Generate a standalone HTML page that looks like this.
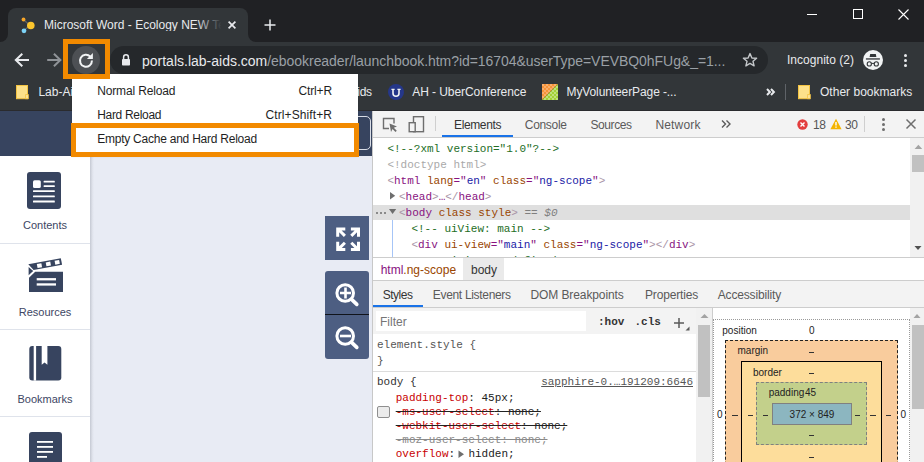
<!DOCTYPE html>
<html><head><meta charset="utf-8">
<style>
*{margin:0;padding:0;box-sizing:border-box}
html,body{width:924px;height:462px;overflow:hidden;background:#202124;font-family:"Liberation Sans",sans-serif;position:relative}
.a{position:absolute;white-space:nowrap}
.mono{font-family:"Liberation Mono",monospace}
svg.a{overflow:visible}
</style></head><body>
<div class="a" style="left:0px;top:0px;width:924px;height:42px;background:#202124;"></div>
<div class="a" style="left:8px;top:8px;width:240px;height:34px;background:#323639;border-radius:8px 8px 0 0"></div>
<div class="a" style="left:0px;top:34px;width:8px;height:8px;background:#323639;"></div>
<div class="a" style="left:0px;top:26px;width:8px;height:16px;background:#202124;border-bottom-right-radius:8px"></div>
<div class="a" style="left:248px;top:34px;width:8px;height:8px;background:#323639;"></div>
<div class="a" style="left:248px;top:26px;width:8px;height:16px;background:#202124;border-bottom-left-radius:8px"></div>
<svg class="a" style="left:20px;top:15.5px;" width="18" height="18" viewBox="0 0 18 18"><line x1="4.5" y1="4.5" x2="10" y2="9.5" stroke="#5f6368" stroke-width="1.2"/><line x1="5" y1="13.5" x2="10" y2="9.5" stroke="#5f6368" stroke-width="1.2"/><circle cx="3.5" cy="3.5" r="1.9" fill="#f8a629"/><circle cx="10.8" cy="9.5" r="3.8" fill="#fcc62d"/><circle cx="4" cy="14.8" r="2.4" fill="#7dd3f7"/></svg>
<div class="a" style="left:44.00px;top:18.84px;font-size:12px;line-height:12px;color:#e8eaed;width:182px;overflow:hidden">Microsoft Word - Ecology NEW Teacher</div>
<div class="a" style="left:196px;top:14px;width:30px;height:22px;background:linear-gradient(to right,rgba(50,54,57,0),#323639 85%);"></div>
<svg class="a" style="left:228px;top:20.7px;" width="8" height="8" viewBox="0 0 8 8"><path d="M0.6 0.6L7.4 7.4M7.4 0.6L0.6 7.4" stroke="#e8eaed" stroke-width="1.7"/></svg>
<svg class="a" style="left:263px;top:18px;" width="14" height="14" viewBox="0 0 14 14"><path d="M7 1.5V12.5M1.5 7H12.5" stroke="#e8eaed" stroke-width="1.5"/></svg>
<div class="a" style="left:807px;top:14px;width:10px;height:1px;background:#fff;"></div>
<div class="a" style="left:853px;top:9px;width:10px;height:10px;border:1px solid #fff"></div>
<svg class="a" style="left:898px;top:9px;" width="11" height="11" viewBox="0 0 11 11"><path d="M0.5 0.5L10.5 10.5M10.5 0.5L0.5 10.5" stroke="#fff" stroke-width="1.1"/></svg>
<div class="a" style="left:0px;top:42px;width:924px;height:68px;background:#323639;"></div>
<div class="a" style="left:0px;top:110px;width:924px;height:1px;background:#2a2b2e;"></div>
<svg class="a" style="left:14px;top:53px;" width="16" height="14" viewBox="0 0 16 14"><path d="M15 7H2M8.3 0.7L1.8 7L8.3 13.3" fill="none" stroke="#e8eaed" stroke-width="2"/></svg>
<svg class="a" style="left:46px;top:53px;" width="16" height="14" viewBox="0 0 16 14"><path d="M1.2 7H14.2M7.9 0.7L14.4 7L7.9 13.3" fill="none" stroke="#8f9397" stroke-width="2"/></svg>
<div class="a" style="left:72px;top:46px;width:28px;height:28px;border-radius:14px;background:#4d5054"></div>
<svg class="a" style="left:78px;top:52px;" width="16" height="16" viewBox="0 0 16 16"><path d="M12.3 4.6A6 6 0 1 0 13.95 8.6" fill="none" stroke="#f1f3f4" stroke-width="2"/><path d="M14.9 0.9V6.9H8.9Z" fill="#f1f3f4"/></svg>
<div class="a" style="left:110px;top:46px;width:658px;height:28px;background:#25282b;border-radius:14px"></div>
<svg class="a" style="left:121px;top:53px;" width="10" height="13" viewBox="0 0 10 13"><path d="M2.6 6V4.2A2.4 2.4 0 0 1 7.4 4.2V6" fill="none" stroke="#e8eaed" stroke-width="1.5"/><rect x="1" y="6" width="8" height="6.5" rx="0.8" fill="#e8eaed"/></svg>
<div class="a" style="left:142.00px;top:54.15px;font-size:14px;line-height:14px;color:#e8eaed;">portals.lab-aids.com<span style="color:#9aa0a6;letter-spacing:-0.05px">/ebookreader/launchbook.htm?id=16704&amp;userType=VEVBQ0hFUg&amp;_=1...</span></div>
<svg class="a" style="left:742px;top:52px;" width="16" height="16" viewBox="0 0 16 16"><path d="M8 1.6L9.9 6L14.6 6.3L11 9.3L12.1 13.9L8 11.4L3.9 13.9L5 9.3L1.4 6.3L6.1 6Z" fill="none" stroke="#c4c7ca" stroke-width="1.4" stroke-linejoin="round"/></svg>
<div class="a" style="left:787.00px;top:53.84px;font-size:12px;line-height:12px;color:#e8eaed;;letter-spacing:0.024px">Incognito (2)</div>
<div class="a" style="left:863px;top:50px;width:20px;height:20px;border-radius:10px;background:#f1f3f4"></div>
<svg class="a" style="left:863px;top:50px;" width="20" height="20" viewBox="0 0 20 20"><path d="M7.2 3.9H12.8L13.4 7H6.6Z" fill="#323639"/><rect x="2.9" y="8.3" width="14" height="1.3" fill="#323639"/><circle cx="6.3" cy="13.9" r="2.1" fill="none" stroke="#323639" stroke-width="1.1"/><circle cx="13.3" cy="13.9" r="2.1" fill="none" stroke="#323639" stroke-width="1.1"/><path d="M8.4 13.4H11.2" stroke="#323639" stroke-width="1"/></svg>
<div class="a" style="left:903.9px;top:54.0px;width:3.2px;height:3.2px;border-radius:2px;background:#e8eaed"></div>
<div class="a" style="left:903.9px;top:58.8px;width:3.2px;height:3.2px;border-radius:2px;background:#e8eaed"></div>
<div class="a" style="left:903.9px;top:63.6px;width:3.2px;height:3.2px;border-radius:2px;background:#e8eaed"></div>
<svg class="a" style="left:16px;top:84.8px;" width="14" height="15" viewBox="0 0 14 15"><rect x="0.5" y="0.5" width="11" height="13.2" fill="#fde18a" stroke="#f4c443" stroke-width="1"/><rect x="9.7" y="9.6" width="2.6" height="4.1" fill="#fde8a6" stroke="#f4c443" stroke-width="0.9"/></svg>
<div class="a" style="left:38.40px;top:86.34px;font-size:12px;line-height:12px;color:#e8eaed;">Lab-Aids</div>
<div class="a" style="left:357.30px;top:86.34px;font-size:12px;line-height:12px;color:#e8eaed;letter-spacing:-0.3px">ids</div>
<svg class="a" style="left:388px;top:84px;" width="16" height="16" viewBox="0 0 16 16"><circle cx="8" cy="8" r="8" fill="#25378a"/><path d="M5 5.4V9.2A3 3 0 0 0 11 9.2V5.4" fill="none" stroke="#f1f3f4" stroke-width="1.6"/><path d="M3.4 5.3H6.6M9.4 5.3H12.6" stroke="#f1f3f4" stroke-width="1.3"/></svg>
<div class="a" style="left:412.20px;top:86.34px;font-size:12px;line-height:12px;color:#e8eaed;;letter-spacing:-0.062px">AH - UberConference</div>
<svg class="a" style="left:542px;top:84px;" width="16" height="16" viewBox="0 0 16 16"><defs><pattern id="p" width="4" height="4" patternUnits="userSpaceOnUse"><rect width="4" height="4" fill="#f69337"/><rect width="2" height="2" fill="#f9ae6b"/><rect x="2" y="2" width="2" height="2" fill="#f9ae6b"/></pattern><pattern id="q" width="4" height="4" patternUnits="userSpaceOnUse"><rect width="4" height="4" fill="#a3d035"/><rect width="2" height="2" fill="#bfe07a"/><rect x="2" y="2" width="2" height="2" fill="#bfe07a"/></pattern></defs><path d="M0 0H16L0 16Z" fill="url(#p)"/><path d="M16 0V16H0Z" fill="url(#q)"/></svg>
<div class="a" style="left:566.50px;top:86.34px;font-size:12px;line-height:12px;color:#e8eaed;;letter-spacing:-0.102px">MyVolunteerPage -...</div>
<svg class="a" style="left:766px;top:88px;" width="10" height="8" viewBox="0 0 10 8"><path d="M1 1L3.9 4L1 7M5 1L7.9 4L5 7" fill="none" stroke="#e8eaed" stroke-width="2"/></svg>
<div class="a" style="left:785px;top:84px;width:1px;height:16px;background:#5f6368;"></div>
<svg class="a" style="left:797.5px;top:84.8px;" width="14" height="15" viewBox="0 0 14 15"><rect x="0.5" y="0.5" width="11" height="13.2" fill="#fde18a" stroke="#f4c443" stroke-width="1"/><rect x="9.7" y="9.6" width="2.6" height="4.1" fill="#fde8a6" stroke="#f4c443" stroke-width="0.9"/></svg>
<div class="a" style="left:820.00px;top:86.34px;font-size:12px;line-height:12px;color:#e8eaed;;letter-spacing:0.019px">Other bookmarks</div>
<div class="a" style="left:0px;top:111px;width:372px;height:45px;background:#37445f;"></div>
<div class="a" style="left:250px;top:116px;width:121px;height:34px;border:1px solid #d9dde6;border-radius:5px"></div>
<div class="a" style="left:0px;top:156px;width:90px;height:306px;background:#ffffff;"></div>
<div class="a" style="left:90px;top:156px;width:282px;height:306px;background:#e8ebf4;"></div>
<div class="a" style="left:90px;top:156px;width:4px;height:306px;background:linear-gradient(to right,#c5c9d3,#dfe2eb 60%,#e8ebf4);"></div>
<div class="a" style="left:0px;top:243px;width:90px;height:1px;background:#dfe3eb;"></div>
<div class="a" style="left:0px;top:329px;width:90px;height:1px;background:#dfe3eb;"></div>
<div class="a" style="left:0px;top:416px;width:90px;height:1px;background:#dfe3eb;"></div>
<svg class="a" style="left:27px;top:171.8px;" width="34" height="38" viewBox="0 0 34 38"><rect x="0" y="0" width="34" height="37" rx="3" fill="#37445f"/><rect x="6" y="8.2" width="7.8" height="7.8" rx="1.6" fill="#fff"/><rect x="16.6" y="8.8" width="11.2" height="1.8" rx="0.5" fill="#fff"/><rect x="16.6" y="13.3" width="11.2" height="1.8" rx="0.5" fill="#fff"/><rect x="6" y="18.3" width="21.8" height="1.8" rx="0.5" fill="#fff"/><rect x="6" y="23.5" width="21.8" height="1.8" rx="0.5" fill="#fff"/><rect x="6" y="28.6" width="21.8" height="1.8" rx="0.5" fill="#fff"/></svg>
<div class="a" style="left:45.00px;top:219.69px;font-size:11px;line-height:11px;color:#3d4663;transform:translateX(-50%)">Contents</div>
<svg class="a" style="left:24px;top:254px;" width="44" height="42" viewBox="0 0 44 42"><path d="M4.3 10.3L36.8 4.2L38.1 10.7L9.6 16.1Z" fill="#37445f"/><rect x="13.149999999999999" y="9.65" width="4.6" height="4" fill="#fff" transform="rotate(-10.7 15.45 11.65)"/><rect x="22.05" y="7.960000000000001" width="4.6" height="4" fill="#fff" transform="rotate(-10.7 24.35 9.96)"/><rect x="30.900000000000002" y="6.300000000000001" width="4.6" height="4" fill="#fff" transform="rotate(-10.7 33.2 8.3)"/><path d="M4.6 13L9.2 17L4.6 21.3Z" fill="#37445f"/><path d="M11.2 17.8H39V38H5V23.7Z" fill="#37445f"/><rect x="12.7" y="24.1" width="19.3" height="2.3" fill="#fff"/><rect x="12.7" y="29.3" width="19.3" height="2.3" fill="#fff"/></svg>
<div class="a" style="left:45.00px;top:306.69px;font-size:11px;line-height:11px;color:#3d4663;transform:translateX(-50%)">Resources</div>
<svg class="a" style="left:29px;top:345px;" width="33" height="36" viewBox="0 0 33 36"><rect x="0.3" y="1" width="32" height="34.6" rx="3" fill="#37445f"/><rect x="4.7" y="1" width="2.4" height="34.6" fill="#fff"/><path d="M12.7 1H18.4V19.8L15.55 17.4L12.7 19.8Z" fill="#fff"/></svg>
<div class="a" style="left:45.00px;top:394.39px;font-size:11px;line-height:11px;color:#3d4663;transform:translateX(-50%)">Bookmarks</div>
<svg class="a" style="left:29px;top:431px;" width="33" height="31" viewBox="0 0 33 31"><rect x="0" y="1" width="33" height="40" rx="3" fill="#37445f"/><rect x="8" y="10" width="16" height="1.8" fill="#fff"/><rect x="8" y="15" width="16" height="1.8" fill="#fff"/><rect x="8" y="20" width="16" height="1.8" fill="#fff"/><rect x="8" y="25" width="10" height="1.8" fill="#fff"/></svg>
<div class="a" style="left:325px;top:216px;width:44px;height:44px;background:#4d5e82;"></div>
<svg class="a" style="left:325px;top:216px;" width="44" height="44" viewBox="0 0 44 44"><g fill="none" stroke="#fff" stroke-width="3"><path d="M12.7 20.8V13.1H20.3M13.5 13.5L19.9 19.9"/><path d="M33.5 20.8V13.1H25.9M32.7 13.5L26.3 19.9"/><path d="M12.7 25.8V33.5H20.3M13.5 33.1L19.9 26.7"/><path d="M33.5 25.8V33.5H25.9M32.7 33.1L26.3 26.7"/></g></svg>
<div class="a" style="left:325px;top:271px;width:44px;height:88px;background:#4d5e82;border-radius:3px"></div>
<div class="a" style="left:325px;top:313.6px;width:44px;height:1.9px;background:#10131a;"></div>
<svg class="a" style="left:325px;top:278px;" width="44" height="44" viewBox="0 0 44 44"><circle cx="20.2" cy="15" r="8.3" fill="none" stroke="#fff" stroke-width="3"/><path d="M26.6 21.4L31.8 26.4" stroke="#fff" stroke-width="3.6" stroke-linecap="round"/><path d="M15 15H26M20.5 9.5V20.5" stroke="#fff" stroke-width="2.6"/></svg>
<svg class="a" style="left:325px;top:321.1px;" width="44" height="44" viewBox="0 0 44 44"><circle cx="20.2" cy="15" r="8.3" fill="none" stroke="#fff" stroke-width="3"/><path d="M26.6 21.4L31.8 26.4" stroke="#fff" stroke-width="3.6" stroke-linecap="round"/><path d="M15 15H26" stroke="#fff" stroke-width="2.6"/></svg>
<div class="a" style="left:372px;top:111px;width:552px;height:351px;background:#ffffff;"></div>
<div class="a" style="left:372px;top:111px;width:1px;height:351px;background:#c8c8c8;"></div>
<div class="a" style="left:373px;top:111px;width:551px;height:26px;background:#f3f3f3;"></div>
<div class="a" style="left:373px;top:137px;width:551px;height:1px;background:#cdcdcd;"></div>
<svg class="a" style="left:382px;top:117px;" width="16" height="16" viewBox="0 0 16 16"><path d="M7 11.5H1.5V1.5H12V6.5" fill="none" stroke="#6e6e6e" stroke-width="1.4"/><path d="M7.5 6.5L15 9.5L11.8 10.8L14.8 13.8L13.5 15L10.5 12L9 15Z" fill="#6e6e6e"/></svg>
<svg class="a" style="left:408px;top:116px;" width="17" height="17" viewBox="0 0 17 17"><rect x="5.5" y="0.7" width="10" height="15" fill="none" stroke="#6e6e6e" stroke-width="1.4"/><rect x="1.2" y="6.7" width="6" height="9" fill="#f3f3f3" stroke="#6e6e6e" stroke-width="1.4"/></svg>
<div class="a" style="left:435px;top:116px;width:1px;height:15px;background:#cfcfcf;"></div>
<div class="a" style="left:454.00px;top:118.84px;font-size:12px;line-height:12px;color:#333333;;letter-spacing:-0.377px">Elements</div>
<div class="a" style="left:442px;top:135px;width:71px;height:2px;background:#1a73e8;"></div>
<div class="a" style="left:524.80px;top:118.84px;font-size:12px;line-height:12px;color:#5a5a5a;;letter-spacing:-0.319px">Console</div>
<div class="a" style="left:590.40px;top:118.84px;font-size:12px;line-height:12px;color:#5a5a5a;;letter-spacing:-0.402px">Sources</div>
<div class="a" style="left:655.40px;top:118.84px;font-size:12px;line-height:12px;color:#5a5a5a;;letter-spacing:0.183px">Network</div>
<svg class="a" style="left:720px;top:118px;" width="12" height="12" viewBox="0 0 12 12"><path d="M2 2.5L5.5 6L2 9.5M6.5 2.5L10 6L6.5 9.5" fill="none" stroke="#5a5a5a" stroke-width="1.4"/></svg>
<svg class="a" style="left:797px;top:119px;" width="11" height="11" viewBox="0 0 11 11"><circle cx="5.5" cy="5.5" r="5.2" fill="#e33e3e"/><path d="M3.5 3.5L7.5 7.5M7.5 3.5L3.5 7.5" stroke="#fff" stroke-width="1.4"/></svg>
<div class="a" style="left:813.00px;top:118.84px;font-size:12px;line-height:12px;color:#555;letter-spacing:-0.4px">18</div>
<svg class="a" style="left:830px;top:118px;" width="12" height="12" viewBox="0 0 12 12"><path d="M6 0.8L11.6 11.2H0.4Z" fill="#f4b400"/><path d="M6 4V7.5M6 8.6V9.8" stroke="#fff" stroke-width="1.4"/></svg>
<div class="a" style="left:845.00px;top:118.84px;font-size:12px;line-height:12px;color:#555;letter-spacing:-0.4px">30</div>
<div class="a" style="left:864px;top:116px;width:1px;height:16px;background:#cfcfcf;"></div>
<div class="a" style="left:881.8px;top:117.80000000000001px;width:3.2px;height:3.2px;background:#6e6e6e;border-radius:50%"></div>
<div class="a" style="left:881.8px;top:122.80000000000001px;width:3.2px;height:3.2px;background:#6e6e6e;border-radius:50%"></div>
<div class="a" style="left:881.8px;top:127.80000000000001px;width:3.2px;height:3.2px;background:#6e6e6e;border-radius:50%"></div>
<svg class="a" style="left:906px;top:119px;" width="10" height="10" viewBox="0 0 10 10"><path d="M0.5 0.5L9.5 9.5M9.5 0.5L0.5 9.5" stroke="#6e6e6e" stroke-width="1.5"/></svg>
<div class="a" style="left:373px;top:205px;width:537px;height:15px;background:#dfdfdf;"></div>
<div class="a" style="left:392px;top:220px;width:1px;height:38px;background:#a6c5f7;"></div>
<div class="a" style="left:373px;top:138px;width:537px;height:119px;overflow:hidden">
<div class="a mono" style="left:14.4px;top:5.57px;font-size:11px;line-height:11px;color:#222"><span style="color:#236e25">&lt;!--?xml version=&quot;1.0&quot;?--&gt;</span></div>
<div class="a mono" style="left:14.4px;top:21.57px;font-size:11px;line-height:11px;color:#222"><span style="color:#a9a9a9">&lt;!doctype html&gt;</span></div>
<div class="a mono" style="left:14.4px;top:37.57px;font-size:11px;line-height:11px;color:#222"><span style="color:#a894a6">&lt;</span><span style="color:#881280">html</span> <span style="color:#994500">lang</span><span style="color:#881280">=&quot;</span><span style="color:#1a1aa6">en</span><span style="color:#881280">&quot;</span> <span style="color:#994500">class</span><span style="color:#881280">=&quot;</span><span style="color:#1a1aa6">ng-scope</span><span style="color:#881280">&quot;</span><span style="color:#a894a6">&gt;</span></div>
<div class="a mono" style="left:26.0px;top:53.57px;font-size:11px;line-height:11px;color:#222"><span style="color:#a894a6">&lt;</span><span style="color:#881280">head</span><span style="color:#a894a6">&gt;</span><span style="color:#881280">…</span><span style="color:#a894a6">&lt;/</span><span style="color:#881280">head</span><span style="color:#a894a6">&gt;</span></div>
<div class="a mono" style="left:26.0px;top:69.57px;font-size:11px;line-height:11px;color:#222"><span style="color:#a894a6">&lt;</span><span style="color:#881280">body</span> <span style="color:#994500">class</span> <span style="color:#994500">style</span><span style="color:#a894a6">&gt;</span> <span style="color:#7f7f7f;font-style:italic">== $0</span></div>
<div class="a mono" style="left:38.4px;top:85.57px;font-size:11px;line-height:11px;color:#222"><span style="color:#236e25">&lt;!-- uiView: main --&gt;</span></div>
<div class="a mono" style="left:38.4px;top:101.57px;font-size:11px;line-height:11px;color:#222"><span style="color:#a894a6">&lt;</span><span style="color:#881280">div</span> <span style="color:#994500">ui-view</span><span style="color:#881280">=&quot;</span><span style="color:#1a1aa6">main</span><span style="color:#881280">&quot;</span> <span style="color:#994500">class</span><span style="color:#881280">=&quot;</span><span style="color:#1a1aa6">ng-scope</span><span style="color:#881280">&quot;</span><span style="color:#a894a6">&gt;</span><span style="color:#a894a6">&lt;/</span><span style="color:#881280">div</span><span style="color:#a894a6">&gt;</span></div>
<div class="a mono" style="left:38.4px;top:117.57px;font-size:11px;line-height:11px;color:#222"><span style="color:#236e25">&lt;!-- uiView: undefined --&gt;</span></div>
</div>
<svg class="a" style="left:390px;top:191.5px;" width="6" height="8" viewBox="0 0 6 8"><path d="M0 0L5.2 3.7L0 7.4Z" fill="#6e6e6e"/></svg>
<svg class="a" style="left:389px;top:209px;" width="8" height="6" viewBox="0 0 8 6"><path d="M0 0H7.2L3.6 5Z" fill="#6e6e6e"/></svg>
<div class="a" style="left:375.5px;top:212.2px;width:2.2px;height:2.2px;background:#6e6e6e;border-radius:1px"></div>
<div class="a" style="left:379.5px;top:212.2px;width:2.2px;height:2.2px;background:#6e6e6e;border-radius:1px"></div>
<div class="a" style="left:383.5px;top:212.2px;width:2.2px;height:2.2px;background:#6e6e6e;border-radius:1px"></div>
<div class="a" style="left:910px;top:138px;width:14px;height:119px;background:#f1f1f1;"></div>
<svg class="a" style="left:912px;top:144px;" width="12" height="6" viewBox="0 0 12 6"><path d="M2.6 5L6.4 0.8L10.2 5Z" fill="#a3a3a3"/></svg>
<div class="a" style="left:912px;top:155px;width:12px;height:17px;background:#c1c1c1;"></div>
<svg class="a" style="left:912px;top:244px;" width="12" height="8" viewBox="0 0 12 8"><path d="M2.5 2L6 6L9.5 2Z" fill="#505050"/></svg>
<div class="a" style="left:373px;top:257px;width:551px;height:1px;background:#cdcdcd;"></div>
<div class="a" style="left:463px;top:258px;width:41px;height:22px;background:#eaeaea;"></div>
<div class="a" style="left:380.70px;top:263.84px;font-size:12px;line-height:12px;color:#333;"><span style="color:#881280">html</span><span style="color:#994500">.ng-scope</span></div>
<div class="a" style="left:471.00px;top:263.84px;font-size:12px;line-height:12px;color:#333;">body</div>
<div class="a" style="left:373px;top:280px;width:551px;height:1px;background:#cdcdcd;"></div>
<div class="a" style="left:373px;top:281px;width:551px;height:26px;background:#f3f3f3;"></div>
<div class="a" style="left:373px;top:307px;width:551px;height:1px;background:#cdcdcd;"></div>
<div class="a" style="left:382.70px;top:288.84px;font-size:12px;line-height:12px;color:#333;;letter-spacing:-0.479px">Styles</div>
<div class="a" style="left:373px;top:305px;width:50px;height:2px;background:#1a73e8;"></div>
<div class="a" style="left:432.80px;top:288.84px;font-size:12px;line-height:12px;color:#5a5a5a;;letter-spacing:-0.319px">Event Listeners</div>
<div class="a" style="left:530.50px;top:288.84px;font-size:12px;line-height:12px;color:#5a5a5a;;letter-spacing:-0.099px">DOM Breakpoints</div>
<div class="a" style="left:645.00px;top:288.84px;font-size:12px;line-height:12px;color:#5a5a5a;;letter-spacing:-0.149px">Properties</div>
<div class="a" style="left:717.70px;top:288.84px;font-size:12px;line-height:12px;color:#5a5a5a;;letter-spacing:-0.158px">Accessibility</div>
<div class="a" style="left:373px;top:308px;width:323px;height:26px;background:#f3f3f3;"></div>
<div class="a" style="left:376px;top:311px;width:210px;height:20px;background:#ffffff;"></div>
<div class="a" style="left:380.00px;top:316.14px;font-size:12px;line-height:12px;color:#757575;">Filter</div>
<div class="a mono" style="left:598.00px;top:316.57px;font-size:11px;line-height:11px;color:#333;font-weight:bold">:hov</div>
<div class="a mono" style="left:634.50px;top:316.57px;font-size:11px;line-height:11px;color:#333;font-weight:bold">.cls</div>
<svg class="a" style="left:673px;top:317px;" width="12" height="12" viewBox="0 0 12 12"><path d="M6 1V11M1 6H11" stroke="#5a5a5a" stroke-width="1.5"/></svg>
<svg class="a" style="left:685px;top:326px;" width="5" height="5" viewBox="0 0 5 5"><path d="M4.5 0.5V4.5H0.5Z" fill="#5a5a5a"/></svg>
<div class="a mono" style="left:377.00px;top:339.57px;font-size:11px;line-height:11px;color:#555;">element.style {</div>
<div class="a mono" style="left:377.00px;top:355.57px;font-size:11px;line-height:11px;color:#555;">}</div>
<div class="a" style="left:373px;top:371px;width:323px;height:1px;background:#dcdcdc;"></div>
<div class="a mono" style="left:377.00px;top:376.57px;font-size:11px;line-height:11px;color:#333;">body {</div>
<div class="a mono" style="right:231.00px;top:376.57px;font-size:11px;line-height:11px;color:#555;text-decoration:underline">sapphire-0.…191209:6646</div>
<div class="a mono" style="left:395.70px;top:392.57px;font-size:11px;line-height:11px;color:#222;"><span style="color:#c80000">padding-top</span>: 45px;</div>
<div class="a" style="left:377px;top:405.5px;width:12.5px;height:12px;background:#ececec;border:1px solid #8f8f8f;border-radius:2px"></div>
<div class="a mono" style="left:395.70px;top:406.57px;font-size:11px;line-height:11px;color:#222;text-decoration:line-through"><span style="color:#c80000">-ms-user-select</span>: none;</div>
<div class="a mono" style="left:395.70px;top:420.57px;font-size:11px;line-height:11px;color:#222;text-decoration:line-through"><span style="color:#c80000">-webkit-user-select</span>: none;</div>
<div class="a mono" style="left:395.70px;top:434.57px;font-size:11px;line-height:11px;color:#8a8a8a;text-decoration:line-through">-moz-user-select: none;</div>
<div class="a mono" style="left:395.70px;top:448.57px;font-size:11px;line-height:11px;color:#222;"><span style="color:#c80000">overflow</span>:<span style="display:inline-block;width:13.3px"></span>hidden;</div>
<svg class="a" style="left:458px;top:449.5px;" width="7" height="9" viewBox="0 0 7 9"><path d="M0.5 0.5L6 4.2L0.5 8Z" fill="#6e6e6e"/></svg>
<div class="a" style="left:696px;top:308px;width:17px;height:154px;background:#f1f1f1;"></div>
<svg class="a" style="left:696px;top:312px;" width="17" height="8" viewBox="0 0 17 8"><path d="M4.5 6L8.5 2L12.5 6Z" fill="#a3a3a3"/></svg>
<div class="a" style="left:697.5px;top:324.5px;width:12.5px;height:72px;background:#c1c1c1;"></div>
<div class="a" style="left:712px;top:308px;width:1px;height:154px;background:#cdcdcd;"></div>
<div class="a" style="left:713px;top:319px;width:197px;height:160px;border:1px dotted #9a9a9a"></div>
<div class="a" style="left:722.30px;top:325.54px;font-size:10px;line-height:10px;color:#222;">position</div>
<div class="a" style="left:809.00px;top:325.54px;font-size:10px;line-height:10px;color:#222;">0</div>
<div class="a" style="left:725px;top:340px;width:173px;height:140px;background:#f9cc9d;border:1px dashed #222"></div>
<div class="a" style="left:737.50px;top:346.34px;font-size:10px;line-height:10px;color:#222;">margin</div>
<div class="a" style="left:808.95px;top:352px;width:5.5px;height:1px;background:#333;"></div>
<div class="a" style="left:741px;top:361px;width:141px;height:110px;background:#fddd9b;border:1.5px solid #000"></div>
<div class="a" style="left:753.00px;top:367.54px;font-size:10px;line-height:10px;color:#222;">border</div>
<div class="a" style="left:808.95px;top:373px;width:5.5px;height:1px;background:#333;"></div>
<div class="a" style="left:756px;top:382px;width:111px;height:63px;background:#c3d08b;border:1px dashed #808080"></div>
<div class="a" style="left:768.70px;top:388.14px;font-size:10px;line-height:10px;color:#222;">padding</div>
<div class="a" style="left:805.00px;top:388.14px;font-size:10px;line-height:10px;color:#222;">45</div>
<div class="a" style="left:772px;top:403px;width:80px;height:22px;background:#8cb6c0;border:1px solid #808080"></div>
<div class="a" style="left:812.00px;top:409.54px;font-size:10px;line-height:10px;color:#222;transform:translateX(-50%)">372 × 849</div>
<div class="a" style="left:808.95px;top:435px;width:5.5px;height:1px;background:#333;"></div>
<div class="a" style="left:808.95px;top:456.5px;width:5.5px;height:1px;background:#333;"></div>
<div class="a" style="left:717.00px;top:409.54px;font-size:10px;line-height:10px;color:#222;">0</div>
<div class="a" style="left:732.25px;top:415px;width:5.5px;height:1px;background:#333;"></div>
<div class="a" style="left:747.65px;top:415px;width:5.5px;height:1px;background:#333;"></div>
<div class="a" style="left:762.75px;top:415px;width:5.5px;height:1px;background:#333;"></div>
<div class="a" style="left:854.75px;top:415px;width:5.5px;height:1px;background:#333;"></div>
<div class="a" style="left:870.25px;top:415px;width:5.5px;height:1px;background:#333;"></div>
<div class="a" style="left:885.75px;top:415px;width:5.5px;height:1px;background:#333;"></div>
<div class="a" style="left:900.50px;top:409.54px;font-size:10px;line-height:10px;color:#222;">0</div>
<div class="a" style="left:910px;top:308px;width:14px;height:154px;background:#f1f1f1;"></div>
<svg class="a" style="left:910px;top:312px;" width="14" height="8" viewBox="0 0 14 8"><path d="M3.5 6L7 2L10.5 6Z" fill="#a3a3a3"/></svg>
<div class="a" style="left:912px;top:324.5px;width:12px;height:84px;background:#c1c1c1;"></div>
<div class="a" style="left:72px;top:74px;width:286px;height:82px;background:#fff;box-shadow:0 1px 2px rgba(0,0,0,0.08)"></div>
<div class="a" style="left:97.20px;top:84.84px;font-size:12px;line-height:12px;color:#1f1f1f;;letter-spacing:-0.142px">Normal Reload</div>
<div class="a" style="right:592.00px;top:84.84px;font-size:12px;line-height:12px;color:#1f1f1f;;letter-spacing:-0.143px">Ctrl+R</div>
<div class="a" style="left:97.20px;top:108.84px;font-size:12px;line-height:12px;color:#1f1f1f;;letter-spacing:-0.307px">Hard Reload</div>
<div class="a" style="right:592.00px;top:108.84px;font-size:12px;line-height:12px;color:#1f1f1f;;letter-spacing:0.085px">Ctrl+Shift+R</div>
<div class="a" style="left:97.20px;top:132.84px;font-size:12px;line-height:12px;color:#1f1f1f;;letter-spacing:-0.236px">Empty Cache and Hard Reload</div>
<div class="a" style="left:71px;top:123px;width:288px;height:34px;border:5px solid #f28a00"></div>
<div class="a" style="left:63px;top:39px;width:47px;height:40px;border:5px solid #f28a00"></div>
</body></html>
